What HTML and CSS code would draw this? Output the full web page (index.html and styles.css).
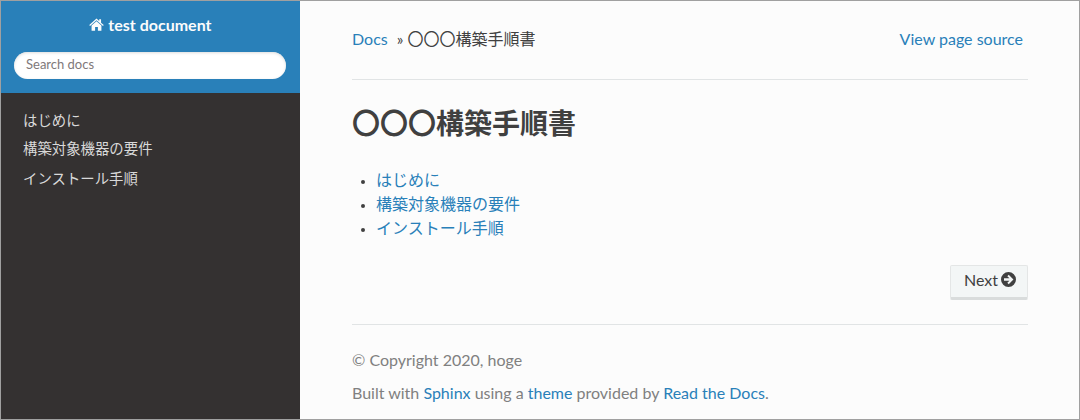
FILE: index.html
```html
<!DOCTYPE html>
<html lang="ja">
<head>
  <meta charset="UTF-8">
  <title>〇〇〇構築手順書</title>
  <link rel="stylesheet" href="styles.css">
</head>
<body>
  <div class="frame">
    <nav class="side">
      <div class="side-top">
        <a class="brand">
          <svg class="home" viewBox="0 0 16 14"><path d="M8 0.6 L10.9 3.2 V1.4 H12.9 V5 L15.8 7.6 L15 8.5 L8 2.4 L1 8.5 L0.2 7.6 Z M8 3.6 L13.3 8.2 V13.6 H9.5 V9.6 H6.5 V13.6 H2.7 V8.2 Z"/></svg>
          test document
        </a>
        <div class="search">Search docs</div>
      </div>
      <ul class="menu">
        <li>はじめに</li>
        <li>構築対象機器の要件</li>
        <li>インストール手順</li>
      </ul>
    </nav>

    <main class="content">
      <div class="crumbs">
        <div><a>Docs</a><span class="sep">»</span>〇〇〇構築手順書</div>
        <a class="source">View page source</a>
      </div>
      <hr>
      <h1>〇〇〇構築手順書</h1>
      <ul class="toc">
        <li><a>はじめに</a></li>
        <li><a>構築対象機器の要件</a></li>
        <li><a>インストール手順</a></li>
      </ul>
      <div class="pager">
        <a class="btn">Next
          <svg class="arrow" viewBox="0 0 14 14"><path fill-rule="evenodd" d="M7 0 A7 7 0 1 1 7 14 A7 7 0 1 1 7 0 Z M7.2 2.6 L5.9 3.9 L7.9 5.8 H2.8 V8.2 H7.9 L5.9 10.1 L7.2 11.4 L11.6 7 Z"/></svg>
        </a>
      </div>
      <hr class="foot-line">
      <footer>
        <p class="copy">© Copyright 2020, hoge</p>
        <p>Built with <a>Sphinx</a> using a <a>theme</a> provided by <a>Read the Docs</a>.</p>
      </footer>
    </main>
  </div>
</body>
</html>
```

FILE: styles.css
```css
* {
  box-sizing: border-box;
}

html, body {
  margin: 0;
  padding: 0;
}

body {
  width: 1080px;
  height: 420px;
  overflow: hidden;
  font-family: Lato, "Noto Sans CJK JP", sans-serif;
  color: #404040;
}

.frame {
  display: flex;
  height: 420px;
  border: 1px solid #a0a0a0;
  background-color: #fcfcfc;
}

a {
  color: #2980b9;
}

.side {
  width: 299px;
  flex-shrink: 0;
  background-color: #343131;
}

.side-top {
  height: 92px;
  padding-top: 13px;
  background-color: #2980b9;
  text-align: center;
}

.brand {
  display: block;
  height: 24px;
  color: #fcfcfc;
  font-size: 16px;
  font-weight: 700;
  line-height: 22px;
}

.home {
  width: 15px;
  height: 13px;
  fill: #fcfcfc;
}

.search {
  width: 272px;
  height: 27px;
  margin: 14px 0 0 13px;
  padding-left: 12px;
  border-radius: 14px;
  background-color: #fff;
  box-shadow: inset 0 1px 3px #ddd;
  color: #80797a;
  font-size: 13px;
  line-height: 24px;
  text-align: left;
}

.menu {
  margin: 0;
  padding: 13px 0 0 22px;
  list-style: none;
  color: #d9d9d9;
  font-size: 14.4px;
}

.menu li {
  height: 30px;
  line-height: 30px;
}

.menu li:first-child {
  height: 28px;
}

.content {
  width: 676px;
  margin-left: 52px;
}

.crumbs {
  display: flex;
  justify-content: space-between;
  height: 78px;
  padding: 26px 5px 0 0;
  font-size: 16px;
  line-height: 24px;
}

.sep {
  margin: 0 4px 0 9px;
  font-size: 15.5px;
}

hr {
  height: 1px;
  margin: 0;
  border: 0;
  background-color: #e1e4e5;
}

h1 {
  margin: 23px 0 0;
  font-size: 28px;
  font-weight: 700;
  line-height: 40px;
}

.toc {
  margin: 25px 0 0;
  padding-left: 24px;
  font-size: 16px;
  line-height: 24px;
}

.toc li::marker {
  font-size: 13px;
  color: #404040;
}

.pager {
  display: flex;
  justify-content: flex-end;
  margin-top: 25px;
}

.btn {
  display: flex;
  align-items: center;
  gap: 3px;
  height: 35px;
  padding: 0 11px 4px 13px;
  border: 1px solid #e4e6e6;
  border-bottom: 3px solid #d9dcdc;
  border-radius: 2px;
  background-color: #f3f6f6;
  color: #404040;
  font-size: 16px;
}

.arrow {
  width: 15px;
  height: 15px;
  fill: #404040;
}

.foot-line {
  margin-top: 24px;
}

footer {
  padding-top: 23px;
  color: #808080;
  font-size: 16px;
  line-height: 24px;
}

footer p {
  margin: 0;
}

.copy {
  padding-bottom: 9px;
}
```
